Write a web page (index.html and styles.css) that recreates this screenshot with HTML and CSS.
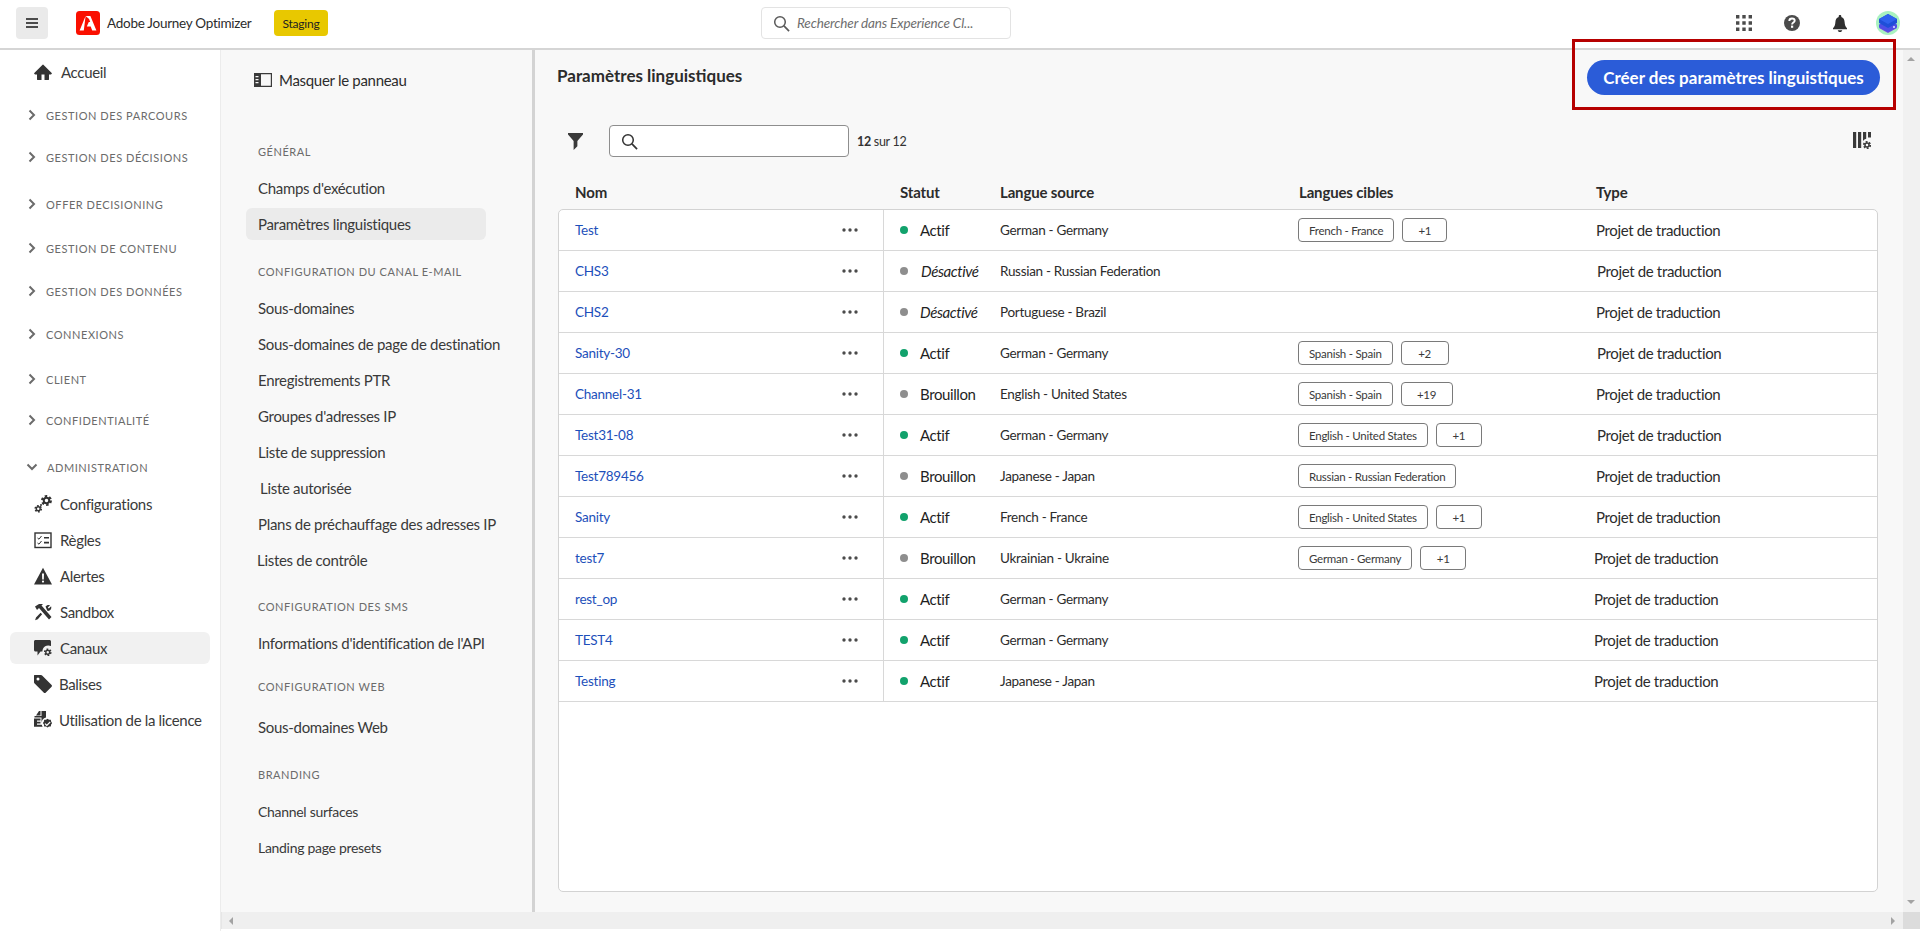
FILE: index.html
```html
<!DOCTYPE html>
<html lang="fr">
<head>
<meta charset="utf-8">
<title>Paramètres linguistiques</title>
<link rel="stylesheet" href="styles.css">
</head>
<body>
<svg class="defs" width="0" height="0" aria-hidden="true">
  <symbol id="gear" viewBox="0 0 18 18">
    <circle cx="9" cy="9" r="6.4" fill="none" stroke="currentColor" stroke-width="3.6" stroke-dasharray="3.6 3.1"/>
    <path fill-rule="evenodd" fill="currentColor" d="M9 3.4a5.6 5.6 0 1 0 0 11.2A5.6 5.6 0 0 0 9 3.4zm0 3a2.6 2.6 0 1 1 0 5.2 2.6 2.6 0 0 1 0-5.2z"/>
  </symbol>
  <symbol id="dots" viewBox="0 0 18 6">
    <circle cx="3" cy="3" r="1.7" fill="currentColor"/><circle cx="9" cy="3" r="1.7" fill="currentColor"/><circle cx="15" cy="3" r="1.7" fill="currentColor"/>
  </symbol>
  <symbol id="lens" viewBox="0 0 18 18">
    <circle cx="7.4" cy="7.4" r="5.6" fill="none" stroke="currentColor" stroke-width="1.6"/>
    <path d="M11.6 11.6 17 17" stroke="currentColor" stroke-width="1.8" fill="none"/>
  </symbol>
  <symbol id="chev" viewBox="0 0 8 12">
    <path d="M1.5 1.5 6 6l-4.5 4.5" fill="none" stroke="currentColor" stroke-width="2"/>
  </symbol>
</svg>

<header class="topbar">
  <button class="menu-btn" type="button" aria-label="Menu">
    <svg class="i-menu" viewBox="0 0 14 12"><path d="M1 1h12v2H1zM1 5h12v2H1zM1 9h12v2H1z" fill="currentColor"/></svg>
  </button>
  <svg class="logo" viewBox="0 0 24 24"><rect width="24" height="24" rx="3.5" fill="#fa0f00"/><path fill="#fff" d="M9.6 5h4.800l6 14.500h-4.200l-1.500-3.900h-3.900l2-4.600h1.400l-1.100-3zM9.600 5 3.600 19.500h4.200z"/></svg>
  <span class="brand">Adobe Journey Optimizer</span>
  <span class="env">Staging</span>
  <div class="global-search">
    <svg class="i-gsearch"><use href="#lens"/></svg>
    <span>Rechercher dans Experience Cl...</span>
  </div>
  <div class="top-icons">
    <svg class="i-grid" viewBox="0 0 16 16"><path fill="currentColor" d="M0 0h3.400v3.400H0zM6.300 0h3.400v3.400H6.300zM12.600 0H16v3.400h-3.400zM0 6.300h3.400v3.400H0zM6.300 6.300h3.400v3.400H6.300zM12.600 6.300H16v3.400h-3.400zM0 12.600h3.400V16H0zM6.300 12.600h3.400V16H6.300zM12.600 12.600H16V16h-3.400z"/></svg>
    <svg class="i-help" viewBox="0 0 16 16"><circle cx="8" cy="8" r="8" fill="currentColor"/><path d="M5.300 6c0-1.600 1.200-2.500 2.700-2.500S10.700 4.400 10.700 5.800c0 1.700-2.600 1.900-2.600 3.600" fill="none" stroke="#fff" stroke-width="1.900"/><rect x="7" y="10.600" width="2.200" height="2.200" fill="#fff"/></svg>
    <svg class="i-bell" viewBox="0 0 14 17"><path fill="currentColor" d="M7 0c.8 0 1.300.5 1.300 1.300v.6C10.500 2.500 11.400 4.300 11.600 7c.2 3 .9 4.800 2.400 6.300v1H0v-1C1.500 11.800 2.200 10 2.400 7c.2-2.700 1.100-4.500 3.300-5.100v-.6C5.700.5 6.200 0 7 0zM4.800 15.200h4.400c0 1-1 1.800-2.200 1.800s-2.200-.8-2.200-1.800z"/></svg>
    <svg class="i-avatar" viewBox="0 0 24 24">
      <circle cx="12" cy="12" r="12" fill="#a9f2c0"/>
      <path d="M12 13 21 17 12 22 3 17z" fill="#7a49e0"/>
      <path d="M12 9.500 21 13.500V16.500L12 21 3 16.500V13.500z" fill="#4f4fe6"/>
      <path d="M12 3 21 8V12L12 17 3 12V8z" fill="#1f4fd8"/>
      <path d="M12 3 21 8 12 13 3 8z" fill="#2f62ee"/>
      <circle cx="18" cy="16" r="1" fill="#dfe6ff"/>
    </svg>
  </div>
</header>

<div class="shell">
  <nav class="nav">
    <a class="nav-item nav-home"><svg class="nav-ico" viewBox="0 0 18 18"><path fill="currentColor" d="M17.700 9.900 9.400 1.700a.5.500 0 0 0-.8 0L.3 9.900a.5.500 0 0 0 0 .8l.7.700H3v5.100c0 .3.200.5.500.5h4v-5.500h3V17h4c.3 0 .5-.2.500-.5v-5.100h2l.7-.7a.5.500 0 0 0 0-.8z"/></svg><span>Accueil</span></a>
    <div class="nav-sec g15"><svg class="chev"><use href="#chev"/></svg>Gestion des parcours</div>
    <div class="nav-sec g22"><svg class="chev"><use href="#chev"/></svg>Gestion des décisions</div>
    <div class="nav-sec g27"><svg class="chev"><use href="#chev"/></svg>Offer decisioning</div>
    <div class="nav-sec g24"><svg class="chev"><use href="#chev"/></svg>Gestion de contenu</div>
    <div class="nav-sec g23"><svg class="chev"><use href="#chev"/></svg>Gestion des données</div>
    <div class="nav-sec g23"><svg class="chev"><use href="#chev"/></svg>Connexions</div>
    <div class="nav-sec g25"><svg class="chev"><use href="#chev"/></svg>Client</div>
    <div class="nav-sec g21"><svg class="chev"><use href="#chev"/></svg>Confidentialité</div>
    <div class="nav-sec g27 nav-open"><svg class="chev-down" viewBox="0 0 12 8"><path d="M1.500 1.500 6 6l4.500-4.500" fill="none" stroke="currentColor" stroke-width="2"/></svg>Administration</div>
    <a class="nav-item g9">
      <svg class="nav-ico" viewBox="0 0 18 18"><use href="#gear" x="6.500" y="-.5" width="12" height="12"/><use href="#gear" x="0" y="9.500" width="8.500" height="8.500"/><circle cx="7" cy="10" r="1" fill="currentColor"/></svg><span>Configurations</span></a>
    <a class="nav-item">
      <svg class="nav-ico" viewBox="0 0 18 18"><rect x="1" y="2" width="16" height="14.500" fill="none" stroke="currentColor" stroke-width="1.400"/><path d="M10 6h5v1.600h-5zM10 10.800h5v1.600h-5z" fill="currentColor"/><path d="M3.500 7 5 8.200 7.500 5M3.500 12 5 13.200 7.500 10" fill="none" stroke="currentColor" stroke-width="1"/></svg><span>Règles</span></a>
    <a class="nav-item">
      <svg class="nav-ico" viewBox="0 0 18 18"><path fill-rule="evenodd" fill="currentColor" d="M9 .8 18 17.500H0zM8 6.500l.2 6h1.600l.2-6zM9 13.500a1.100 1.100 0 1 0 0 2.200 1.100 1.100 0 0 0 0-2.200z"/></svg><span>Alertes</span></a>
    <a class="nav-item">
      <svg class="nav-ico" viewBox="0 0 18 18"><path fill="currentColor" d="M1 3.500 5 1h4L7.500 2.500 17.500 14 15 16.500 5 5 3 7zM11.500 3.500c1-1.500 3-2 4.500-1.300L13.800 4.500l1 1 2.300-2.200c.6 1.700 0 3.500-1.500 4.300-.8.400-1.600.4-2.300.2zM6.600 9.700 2 14.500l-.9 2.700 2.700-.9 4.300-5z"/></svg><span>Sandbox</span></a>
    <a class="nav-item nav-active">
      <svg class="nav-ico" viewBox="0 0 18 18"><path fill="currentColor" d="M1.500 1h14c.8 0 1.500.7 1.500 1.500V7a6 6 0 0 0-8.600 5.500H6.500L3.500 16.500v-4h-2C.7 12.500 0 11.800 0 11V2.500C0 1.700.7 1 1.500 1z"/><use href="#gear" x="9.500" y="9" width="8.500" height="8.500"/></svg><span>Canaux</span></a>
    <a class="nav-item nav-tag">
      <svg class="nav-ico" viewBox="0 0 18 18"><path fill-rule="evenodd" fill="currentColor" d="M.5 0H7c.5 0 .8.200 1.100.5l9.500 9.500c.5.500.5 1.200 0 1.700l-6 6c-.5.500-1.200.5-1.700 0L.4 8.200C.1 7.900 0 7.500 0 7V.5C0 .2.200 0 .5 0zM4 2.500a1.500 1.500 0 1 0 0 3 1.500 1.500 0 0 0 0-3z"/></svg><span>Balises</span></a>
    <a class="nav-item nav-tag">
      <svg class="nav-ico" viewBox="0 0 18 18"><path fill="currentColor" d="M5 0h1.500v4.500H2zM7.500 0H12v6.500A6 6 0 0 0 7.500 12V6.500h-7V5h7zM0 7.500h6.500v2H3v1.200h3.500v1.800H3v1.200h4.800c.2.800.5 1.500.9 2.100H0z"/><path fill="currentColor" fill-rule="evenodd" d="M13.500 7.700l1.500 1 1.800.1.300 1.800 1 1.500-1 1.500-.3 1.800-1.800.1-1.500 1-1.500-1-1.800-.1-.3-1.800-1-1.500 1-1.500.3-1.800 1.800-.1zm2.300 2.900-3 3-1.500-1.400-.8.800 2.300 2.300 3.800-3.900z"/></svg><span>Utilisation de la licence</span></a>
  </nav>

  <div class="workspace">
    <div class="workspace-main">
      <aside class="panel">
        <a class="panel-toggle">
          <svg class="i-panel" viewBox="0 0 18 14"><path fill="currentColor" fill-rule="evenodd" d="M0 0h18v14H0zM7 1.200v11.600h9.800V1.200z"/><path fill="#f8f8f8" d="M1.500 3h3v1.200h-3zM1.500 6h3v1.200h-3zM1.500 9h3v1.200h-3z"/></svg>
          Masquer le panneau
        </a>
        <h3 class="panel-label m44">Général</h3>
        <a class="panel-item m8">Champs d'exécution</a>
        <a class="panel-item panel-current">Paramètres linguistiques</a>
        <h3 class="panel-label m22">Configuration du canal e-mail</h3>
        <a class="panel-item m8">Sous-domaines</a>
        <a class="panel-item">Sous-domaines de page de destination</a>
        <a class="panel-item">Enregistrements PTR</a>
        <a class="panel-item">Groupes d'adresses IP</a>
        <a class="panel-item">Liste de suppression</a>
        <a class="panel-item shift2">Liste autorisée</a>
        <a class="panel-item">Plans de préchauffage des adresses IP</a>
        <a class="panel-item shiftm1">Listes de contrôle</a>
        <h3 class="panel-label m19">Configuration des SMS</h3>
        <a class="panel-item m8">Informations d'identification de l'API</a>
        <h3 class="panel-label m16">Configuration Web</h3>
        <a class="panel-item m12">Sous-domaines Web</a>
        <h3 class="panel-label m20">Branding</h3>
        <a class="panel-item m8 panel-small">Channel surfaces</a>
        <a class="panel-item panel-small">Landing page presets</a>
      </aside>

      <main class="main">
        <div class="main-head">
          <h1>Paramètres linguistiques</h1>
          <button class="cta" type="button">Créer des paramètres linguistiques</button>
        </div>
        <div class="toolbar">
          <svg class="i-filter" viewBox="0 0 16 18"><path fill="currentColor" d="M0 0h16v1.500L10 8.500V14l-4 4V8.500L0 1.500z"/></svg>
          <div class="search"><svg class="i-search"><use href="#lens"/></svg></div>
          <span class="count"><b>12</b> sur 12</span>
          <svg class="i-cols" viewBox="0 0 18 18"><path fill="currentColor" d="M0 0h3.200v16H0zM5 0h3.200v16H5zM10 0h3.200v6.800A6.500 6.500 0 0 0 10 9zM15 0h3v5.500h-3z"/><use href="#gear" x="9.500" y="8.500" width="9" height="9"/></svg>
        </div>
        <div class="cols">
          <div>Nom</div><div>Statut</div><div>Langue source</div><div>Langues cibles</div><div>Type</div>
        </div>
        <div class="table">
          <div class="row"><div class="c-name"><a>Test</a><svg class="i-dots"><use href="#dots"/></svg></div><div class="c-status"><i class="dot on"></i><span>Actif</span></div><div class="c-src">German - Germany</div><div class="c-tags"><span class="tag">French - France</span><span class="tag w44">+1</span></div><div class="c-type">Projet de traduction</div></div>
          <div class="row"><div class="c-name"><a>CHS3</a><svg class="i-dots"><use href="#dots"/></svg></div><div class="c-status"><i class="dot"></i><em class="off2">Désactivé</em></div><div class="c-src">Russian - Russian Federation</div><div class="c-tags"></div><div class="c-type t1">Projet de traduction</div></div>
          <div class="row"><div class="c-name"><a>CHS2</a><svg class="i-dots"><use href="#dots"/></svg></div><div class="c-status"><i class="dot"></i><em>Désactivé</em></div><div class="c-src">Portuguese - Brazil</div><div class="c-tags"></div><div class="c-type">Projet de traduction</div></div>
          <div class="row"><div class="c-name"><a>Sanity-30</a><svg class="i-dots"><use href="#dots"/></svg></div><div class="c-status"><i class="dot on"></i><span>Actif</span></div><div class="c-src">German - Germany</div><div class="c-tags"><span class="tag">Spanish - Spain</span><span class="tag w48">+2</span></div><div class="c-type t1">Projet de traduction</div></div>
          <div class="row"><div class="c-name"><a>Channel-31</a><svg class="i-dots"><use href="#dots"/></svg></div><div class="c-status"><i class="dot"></i><span>Brouillon</span></div><div class="c-src">English - United States</div><div class="c-tags"><span class="tag">Spanish - Spain</span><span class="tag w52">+19</span></div><div class="c-type">Projet de traduction</div></div>
          <div class="row"><div class="c-name"><a>Test31-08</a><svg class="i-dots"><use href="#dots"/></svg></div><div class="c-status"><i class="dot on"></i><span>Actif</span></div><div class="c-src">German - Germany</div><div class="c-tags"><span class="tag">English - United States</span><span class="tag w46">+1</span></div><div class="c-type t1">Projet de traduction</div></div>
          <div class="row"><div class="c-name"><a>Test789456</a><svg class="i-dots"><use href="#dots"/></svg></div><div class="c-status"><i class="dot"></i><span>Brouillon</span></div><div class="c-src">Japanese - Japan</div><div class="c-tags"><span class="tag">Russian - Russian Federation</span></div><div class="c-type">Projet de traduction</div></div>
          <div class="row"><div class="c-name"><a>Sanity</a><svg class="i-dots"><use href="#dots"/></svg></div><div class="c-status"><i class="dot on"></i><span>Actif</span></div><div class="c-src">French - France</div><div class="c-tags"><span class="tag">English - United States</span><span class="tag w46">+1</span></div><div class="c-type">Projet de traduction</div></div>
          <div class="row"><div class="c-name"><a>test7</a><svg class="i-dots"><use href="#dots"/></svg></div><div class="c-status"><i class="dot"></i><span>Brouillon</span></div><div class="c-src">Ukrainian - Ukraine</div><div class="c-tags"><span class="tag">German - Germany</span><span class="tag w46">+1</span></div><div class="c-type tm2">Projet de traduction</div></div>
          <div class="row"><div class="c-name"><a>rest_op</a><svg class="i-dots"><use href="#dots"/></svg></div><div class="c-status"><i class="dot on"></i><span>Actif</span></div><div class="c-src">German - Germany</div><div class="c-tags"></div><div class="c-type tm2">Projet de traduction</div></div>
          <div class="row"><div class="c-name"><a>TEST4</a><svg class="i-dots"><use href="#dots"/></svg></div><div class="c-status"><i class="dot on"></i><span>Actif</span></div><div class="c-src">German - Germany</div><div class="c-tags"></div><div class="c-type tm2">Projet de traduction</div></div>
          <div class="row"><div class="c-name"><a>Testing</a><svg class="i-dots"><use href="#dots"/></svg></div><div class="c-status"><i class="dot on"></i><span>Actif</span></div><div class="c-src">Japanese - Japan</div><div class="c-tags"></div><div class="c-type tm2">Projet de traduction</div></div>
        </div>
      </main>

      <div class="vscroll"><i class="arrow-up"></i><i class="arrow-down"></i></div>
    </div>
    <div class="hscroll"><i class="arrow-left"></i><i class="arrow-right"></i><span class="corner"></span></div>
  </div>
</div>

<div class="callout"></div>
</body>
</html>
```
FILE: styles.css
```css
* { box-sizing: border-box; }
html, body { margin: 0; height: 931px; overflow: hidden; }
body { font-family: Lato, "Open Sans", sans-serif; color: #2c2c2c; background: #fff; position: relative; font-size: 15px; }
.defs { position: absolute; }
a { color: inherit; text-decoration: none; }
h1, h3 { margin: 0; }

/* top bar */
.topbar { height: 50px; border-bottom: 2px solid #d5d5d5; display: flex; align-items: center; background: #fff; padding: 0 20px 2px 16px; position: relative; }
.menu-btn { width: 32px; height: 32px; border: 0; border-radius: 4px; background: #eaeaea; color: #4b4b4b; display: flex; align-items: center; justify-content: center; padding: 0; }
.i-menu { width: 14px; height: 12px; }
.logo { width: 24px; height: 24px; margin-left: 28px; }
.brand { margin-left: 7px; font-size: 13.500px; letter-spacing: -.27px; color: #2c2c2c; white-space: nowrap; width: 144px; }
.env { margin-left: 23px; width: 54px; height: 26px; border-radius: 4px; background: #e8c800; font-size: 12px; letter-spacing: -.2px; display: flex; align-items: center; justify-content: center; color: #222; }
.global-search { margin-left: 433px; width: 250px; height: 32px; border: 1px solid #e3e3e3; border-radius: 4px; display: flex; align-items: center; padding-left: 11px; color: #6e6e6e; font-style: italic; font-size: 13.500px; letter-spacing: -.12px; }
.i-gsearch { width: 17px; height: 17px; margin-right: 7px; color: #5a5a5a; }
.top-icons { margin-left: auto; display: flex; align-items: center; color: #4b4b4b; }
.i-grid { width: 16px; height: 16px; }
.i-help { width: 16px; height: 16px; margin-left: 32px; }
.i-bell { width: 14px; height: 17px; margin-left: 33px; color: #2f2f2f; }
.i-avatar { width: 24px; height: 24px; margin-left: 29px; }

/* shell */
.shell { display: flex; height: 881px; }
.nav { width: 221px; flex: none; background: #fff; border-right: 1px solid #ececec; padding: 4px 10px 0; }
.nav-item { display: flex; align-items: center; height: 36px; padding-left: 24px; font-size: 15px; letter-spacing: -.33px; color: #3a3a3a; border-radius: 6px; white-space: nowrap; }
.nav-ico { width: 18px; height: 18px; color: #333; flex: none; margin-right: 8px; }
.nav-home .nav-ico { margin-right: 9px; }
.nav-tag .nav-ico { margin-right: 7px; }
.nav-active { height: 32px; margin: 2px 0; background: #f1f1f1; }
.nav-sec { display: flex; align-items: center; height: 20px; padding-left: 18px; font-size: 11px; letter-spacing: .05em; text-transform: uppercase; color: #6b6b6b; white-space: nowrap; }
.chev { width: 8px; height: 12px; margin-right: 10px; color: #6b6b6b; flex: none; }
.chev-down { width: 12px; height: 8px; margin: 0 9px 0 -2px; color: #6b6b6b; flex: none; }
.g9 { margin-top: 9px; } .g15 { margin-top: 15px; } .g21 { margin-top: 21px; } .g22 { margin-top: 22px; } .g23 { margin-top: 23px; } .g24 { margin-top: 24px; } .g25 { margin-top: 25px; } .g27 { margin-top: 27px; }

.workspace { flex: 1; min-width: 0; display: flex; flex-direction: column; }
.workspace-main { flex: none; height: 862px; display: flex; }

/* secondary panel */
.panel { width: 314px; flex: none; background: #f8f8f8; border-right: 3px solid #d3d3d3; padding: 12px 0 0 25px; }
.panel-toggle { display: flex; align-items: center; height: 36px; padding-left: 8px; font-size: 15px; letter-spacing: -.3px; color: #2c2c2c; }
.i-panel { width: 18px; height: 14px; margin-right: 7px; color: #3a3a3a; }
.panel-label { height: 20px; line-height: 20px; padding-left: 12px; font-size: 11px; font-weight: 400; letter-spacing: .05em; text-transform: uppercase; color: #6b6b6b; white-space: nowrap; }
.panel-item { display: flex; align-items: center; height: 36px; padding-left: 12px; font-size: 15px; letter-spacing: -.3px; color: #3a3a3a; white-space: nowrap; width: 240px; }
.panel-current { height: 32px; margin: 2px 0; background: #ebebeb; border-radius: 6px; }
.panel-small { font-size: 14px; }
.shift2 { padding-left: 14px; }
.shiftm1 { padding-left: 11px; }
.m8 { margin-top: 8px; } .m12 { margin-top: 12px; } .m16 { margin-top: 16px; } .m19 { margin-top: 19px; } .m20 { margin-top: 20px; } .m22 { margin-top: 22px; } .m44 { margin-top: 44px; }

/* main */
.main { flex: 1; min-width: 0; background: #f8f8f8; padding: 10px 25px 0 23px; }
.main-head { display: flex; align-items: center; justify-content: space-between; height: 35px; }
.main-head h1 { font-size: 17px; font-weight: 700; color: #2c2c2c; margin: 0 0 5px -1px; }
.cta { width: 293px; height: 35px; margin-right: -2px; border: 0; border-radius: 18px; background: #2b5cd8; color: #fff; font: 700 17px Lato, sans-serif; padding: 0; }
.toolbar { display: flex; align-items: center; height: 32px; margin-top: 30px; }
.i-filter { width: 15px; height: 17px; margin-left: 10px; color: #3a3a3a; }
.search { width: 240px; height: 32px; margin-left: 26px; border: 1px solid #8e8e8e; border-radius: 4px; background: #fff; display: flex; align-items: center; padding-left: 11px; }
.i-search { width: 17px; height: 17px; color: #333; }
.count { margin-left: 8px; font-size: 12.500px; letter-spacing: -.3px; color: #333; }
.count b { font-weight: 700; }
.i-cols { width: 18px; height: 18px; margin-left: auto; margin-right: 7px; color: #3a3a3a; }
.cols { height: 52px; display: grid; grid-template-columns: 325px 100px 299px 297px 1fr; align-items: end; padding: 0 0 7px 17px; font-size: 15px; font-weight: 700; letter-spacing: -.15px; color: #2c2c2c; line-height: 20px; }
.table { height: 683px; background: #fff; border: 1px solid #d3d3d3; border-radius: 5px; overflow: hidden; }
.row { display: grid; grid-template-columns: 325px 116px 299px 297px 1fr; height: 41px; border-bottom: 1px solid #d8d8d8; align-items: center; }
.row > div { height: 100%; display: flex; align-items: center; }
.c-name { border-right: 1px solid #d8d8d8; padding: 0 24px 0 16px; justify-content: space-between; }
.c-name a { color: #1d4fba; font-size: 13.500px; letter-spacing: -.25px; }
.i-dots { width: 18px; height: 6px; color: #4b4b4b; }
.c-status { padding-left: 16px; font-size: 15px; letter-spacing: -.4px; color: #1f1f1f; }
.c-status span { margin-left: 12px; }
.c-status em { margin-left: 12px; }
.c-status em.off2 { margin-left: 13px; }
.dot { width: 8px; height: 8px; border-radius: 50%; background: #8e8e8e; flex: none; }
.dot.on { background: #12a26c; }
.c-src { font-size: 13.500px; letter-spacing: -.3px; color: #2c2c2c; white-space: nowrap; }
.c-tags { gap: 8px; margin-left: -1px; }
.tag { height: 24px; padding: 0 10px; border: 1px solid #7a7a7a; border-radius: 4px; background: #fff; font-size: 11.500px; letter-spacing: -.26px; color: #3a3a3a; display: inline-flex; align-items: center; justify-content: center; white-space: nowrap; }
.w44 { width: 45px; padding: 0; } .w46 { width: 46px; padding: 0; } .w48 { width: 48px; padding: 0; } .w52 { width: 52px; padding: 0; }
.c-type { font-size: 15px; letter-spacing: -.35px; color: #2c2c2c; white-space: nowrap; }
.t1 { padding-left: 1px; }
.tm2 { margin-left: -2px; }

/* fake scrollbars */
.vscroll { width: 17px; flex: none; background: #f1f1f1; position: relative; }
.arrow-up, .arrow-down, .arrow-left, .arrow-right { position: absolute; width: 0; height: 0; border: 4px solid transparent; }
.arrow-up { top: 3px; left: 4px; border-bottom: 4px solid #a3a3a3; }
.arrow-down { bottom: 4px; left: 4px; border-top: 4px solid #a3a3a3; }
.hscroll { height: 17px; flex: none; background: #efefef; position: relative; border-left: 1px solid #e6e6e6; }
.arrow-left { left: 3px; top: 5px; border-right: 4px solid #a3a3a3; }
.arrow-right { right: 21px; top: 5px; border-left: 4px solid #a3a3a3; }
.corner { position: absolute; right: 0; top: 0; width: 17px; height: 17px; background: #dcdcdc; }

/* annotation */
.callout { position: absolute; left: 1572px; top: 39px; width: 324px; height: 71px; border: 3px solid #b60000; }
```
